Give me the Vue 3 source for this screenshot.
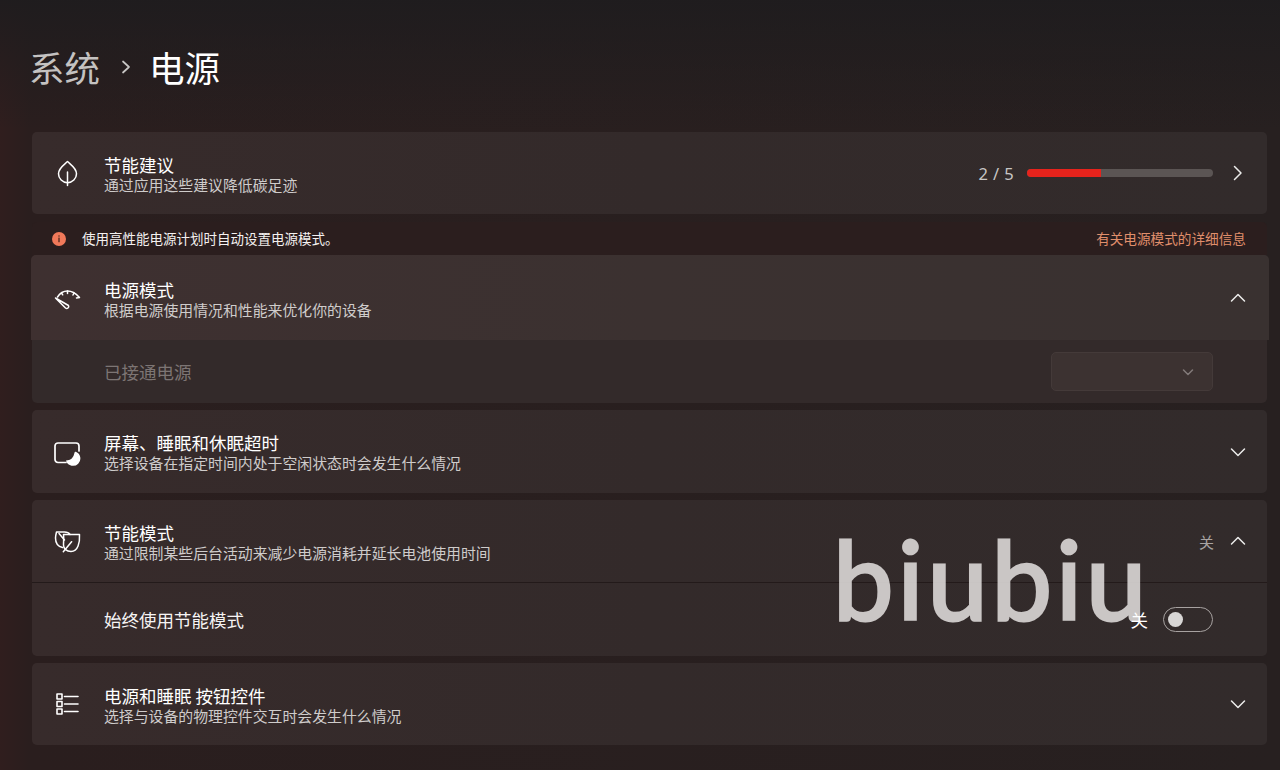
<script setup>
const stroke = { fill: 'none', stroke: 'currentColor', 'stroke-width': 1.5, 'stroke-linecap': 'round', 'stroke-linejoin': 'round' }
</script>

<template>
  <div class="page">
    <header class="title">
      <span class="crumb">系统</span>
      <svg class="crumb-sep" width="12" height="16" viewBox="0 0 12 16"><path d="M3 2.500 9 8l-6 5.500" v-bind="stroke" stroke-width="1.700" /></svg>
      <span class="current">电源</span>
    </header>

    <section class="list">
      <div class="card row first">
        <svg class="icon" width="28" height="28" viewBox="0 0 28 28" v-bind="stroke">
          <path d="M14.500 2.500c3 3 9 6.500 9 12.200a9 9 0 0 1-18 0C5.500 9 11.500 5.500 14.500 2.500Z" />
          <path d="M14.500 13V26.500" />
        </svg>
        <div class="text">
          <div class="name">节能建议</div>
          <div class="desc">通过应用这些建议降低碳足迹</div>
        </div>
        <span class="score">2 / 5</span>
        <div class="bar"><div class="fill" style="width: 40%"></div></div>
        <svg class="chev" width="16" height="16" viewBox="0 0 16 16" v-bind="stroke"><path d="M4.500 1.500 11 8l-6.500 6.500" /></svg>
      </div>

      <div class="notice">
        <span class="dot">
          <svg width="14" height="14" viewBox="0 0 14 14"><circle cx="7" cy="7" r="7" fill="#f0795a" /><rect x="6.400" y="3.400" width="1.200" height="1.200" fill="#402018" /><rect x="6.400" y="5.600" width="1.200" height="4.600" fill="#402018" /></svg>
        </span>
        <span class="notice-text">使用高性能电源计划时自动设置电源模式。</span>
        <span class="link">有关电源模式的详细信息</span>
      </div>

      <div class="group mode">
        <div class="row head">
          <svg class="icon" width="28" height="28" viewBox="0 0 28 28" v-bind="stroke">
            <path d="M4.500 13C7 9 10.500 7 14.500 7s8 2 11.500 6" />
            <path d="M14.500 7v2.500M26.500 13.500l-3 .5M21 9l-1 2M8.500 9l1.200 1.800" />
            <path d="M2.500 14 15.500 21.500a2 2 0 0 1-3 2.500Z" />
          </svg>
          <div class="text">
            <div class="name">电源模式</div>
            <div class="desc">根据电源使用情况和性能来优化你的设备</div>
          </div>
          <svg class="chev" width="16" height="16" viewBox="0 0 16 16" v-bind="stroke"><path d="M1.500 11 8 4.500l6.500 6.500" /></svg>
        </div>
        <div class="sub disabled">
          <span>已接通电源</span>
          <div class="select">
            <svg width="12" height="12" viewBox="0 0 12 12" v-bind="stroke"><path d="M1.500 4 6 8.500 10.500 4" /></svg>
          </div>
        </div>
      </div>

      <div class="card row gap screen">
        <svg class="icon" width="28" height="28" viewBox="0 0 28 28" v-bind="stroke" stroke-width="1.700">
          <path d="M13 24.500H5a3 3 0 0 1-3-3V8a3 3 0 0 1 3-3h18a3 3 0 0 1 3 3v5" />
          <path d="M22.500 14.500a6.500 6.500 0 1 1-8.500 8.500c4 .5 7.500-3 8.500-8.500Z" fill="currentColor" />
        </svg>
        <div class="text">
          <div class="name">屏幕、睡眠和休眠超时</div>
          <div class="desc">选择设备在指定时间内处于空闲状态时会发生什么情况</div>
        </div>
        <svg class="chev" width="16" height="16" viewBox="0 0 16 16" v-bind="stroke"><path d="M1.500 5 8 11.500 14.500 5" /></svg>
      </div>

      <div class="group saver gap">
        <div class="row head">
          <svg class="icon" width="28" height="28" viewBox="0 0 28 28" v-bind="stroke">
            <path d="M9.500 20.500C5 19.500 2.500 15.500 2.500 11c0-2 .5-4 1-6h8c2.500 0 4.500 1 5.500 2.500" />
            <path d="M10.500 7.500H26.500c.5 8-1.500 17-8.500 17-4.500 0-7.500-2.800-7.500-6.500 0-4 .5-7 0-10.500Z" />
            <path d="M6 6.500l5.500 6.500M10.300 24.700l8.300-10" />
          </svg>
          <div class="text">
            <div class="name">节能模式</div>
            <div class="desc">通过限制某些后台活动来减少电源消耗并延长电池使用时间</div>
          </div>
          <span class="off-dim">关</span>
          <svg class="chev" width="16" height="16" viewBox="0 0 16 16" v-bind="stroke"><path d="M1.500 11 8 4.500l6.500 6.500" /></svg>
        </div>
        <div class="sub">
          <span>始终使用节能模式</span>
          <span class="off">关</span>
          <div class="toggle"><i></i></div>
        </div>
      </div>

      <div class="card row gap">
        <svg class="icon" width="28" height="28" viewBox="0 0 28 28" v-bind="stroke" stroke-width="1.600">
          <rect x="4" y="4" width="5" height="5" />
          <rect x="4" y="11.500" width="5" height="5" />
          <rect x="4" y="19" width="5" height="5" />
          <path d="M11.500 6.500h13.500M11.500 14h13.500M11.500 21.500h13.500" />
        </svg>
        <div class="text">
          <div class="name">电源和睡眠 按钮控件</div>
          <div class="desc">选择与设备的物理控件交互时会发生什么情况</div>
        </div>
        <svg class="chev" width="16" height="16" viewBox="0 0 16 16" v-bind="stroke"><path d="M1.500 5 8 11.500 14.500 5" /></svg>
      </div>
    </section>

    <div class="mark">biubiu</div>
  </div>
</template>

<style>
html, body { margin: 0; background: #241c1c; }
</style>

<style scoped>
.page {
  position: relative;
  width: 1280px;
  height: 770px;
  overflow: hidden;
  box-sizing: border-box;
  padding: 0 13px 0 32px;
  color: #fff;
  font-family: "Noto Sans CJK SC", "Noto Sans", sans-serif;
  background:
    linear-gradient(180deg, rgba(30, 28, 30, 0.9) 0, rgba(30, 28, 30, 0) 130px),
    linear-gradient(90deg, #301e1e 0, #2a1e1e 30px, #272020 100%);
}
.title {
  height: 132px;
  display: flex;
  align-items: center;
  padding: 2px 0 0 0;
  box-sizing: border-box;
  margin-left: -3px;
  font-size: 35.500px;
  line-height: 50px;
}
.crumb { color: #c4c2c1; }
.crumb-sep { margin: 0 17px 0 20px; color: #c8c6c5; }
.current { color: #fff; }
.list { display: flex; flex-direction: column; }
.card, .group {
  border-radius: 5px;
  background: linear-gradient(90deg, #372b2b 0, #332a2a 50%, #322b2b 100%);
}
.row {
  height: 82px;
  display: flex;
  align-items: center;
  padding-left: 21px;
  padding-right: 21px;
  box-sizing: border-box;
}
.screen { height: 83px; }
.gap { margin-top: 7px; }
.icon { color: #fff; flex: none; margin-right: 23px; }
.text { flex: 1; min-width: 0; padding-top: 2px; }
.name { font-size: 17.500px; line-height: 21px; color: #fff; }
.desc { font-size: 14.880px; line-height: 20px; color: #cfcccb; }
.score {
  font-family: "Noto Sans", sans-serif;
  font-size: 16.500px;
  color: #c8c6c5;
  letter-spacing: 0.400px;
  margin-right: 13px;
}
.bar {
  width: 186px;
  height: 8px;
  border-radius: 4px;
  overflow: hidden;
  background: #5b5554;
  margin-right: 17px;
}
.fill { height: 100%; background: #e6231c; }
.chev { color: #ececeb; flex: none; }
.notice {
  margin-top: 8px;
  height: 33px;
  display: flex;
  align-items: center;
  padding: 0 21px 2px 20px;
  box-sizing: border-box;
  background: #2b1e1e;
  border-radius: 5px 5px 0 0;
  font-size: 13.500px;
}
.dot { display: flex; margin-right: 16px; padding-top: 2px; }
.notice-text { flex: 1; color: #f4f1f0; }
.link { color: #e08f6c; font-size: 13.640px; }
.mode { background: #332a2a; }
.mode .head {
  height: 85px;
  margin: 0 -2px 0 -1px;
  padding-left: 22px;
  padding-right: 23px;
  border-radius: 5px 5px 0 0;
  background: linear-gradient(90deg, #3e3030 0, #3b3130 50%, #393130 100%);
}
.mode .text { padding-top: 4px; }
.sub {
  height: 63px;
  display: flex;
  align-items: center;
  padding: 0 54px 0 72px;
  box-sizing: border-box;
  font-size: 17.500px;
  color: #f6f4f4;
}
.sub > span:first-child { flex: 1; }
.disabled { color: #7d7574; }
.select {
  width: 162px;
  height: 39px;
  border-radius: 5px;
  background: #3c3231;
  border: 1px solid #443a39;
  box-sizing: border-box;
  display: flex;
  align-items: center;
  justify-content: flex-end;
  padding-right: 18px;
  color: #827a79;
}
.saver .head { border-bottom: 1px solid #231a1a; height: 83px; }
.saver .sub { height: 73px; }
.off-dim { font-size: 15px; color: #a8a3a2; margin-right: 16px; }
.off { font-size: 17.500px; margin-right: 15px; color: #fff; position: relative; z-index: 2; }
.toggle {
  width: 50px;
  height: 25px;
  box-sizing: border-box;
  border: 1px solid #a7a2a1;
  border-radius: 13px;
  display: flex;
  align-items: center;
  padding-left: 4px;
  position: relative;
  z-index: 2;
}
.toggle i {
  display: block;
  width: 15px;
  height: 15px;
  border-radius: 50%;
  background: #d8d6d5;
}
.mark {
  position: absolute;
  left: 833px;
  top: 503px;
  font-family: "Lato", sans-serif;
  font-size: 108px;
  line-height: 150px;
  font-weight: 400;
  letter-spacing: 4px;
  color: #e5e2e1;
  -webkit-text-stroke: 3px #e5e2e1;
  opacity: 0.85;
  pointer-events: none;
}
</style>
